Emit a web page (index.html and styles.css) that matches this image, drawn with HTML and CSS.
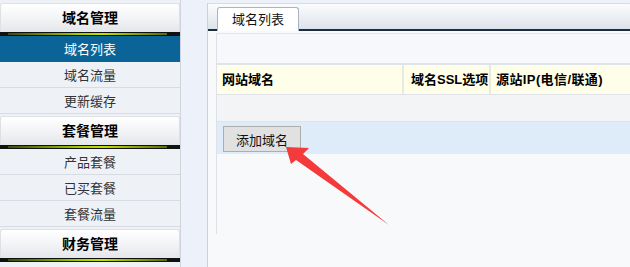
FILE: index.html
```html
<!DOCTYPE html>
<html lang="zh-CN">
<head>
    <meta charset="UTF-8">
    <title>域名列表</title>
    <link rel="stylesheet" href="styles.css">
</head>
<body>
    <div class="page">
        <div class="sidebar">
            <div class="menu-group">
                <div class="menu-title">域名管理</div>
                <div class="menu-bar"><span></span></div>
                <a class="menu-item active" href="#">域名列表</a>
                <a class="menu-item" href="#">域名流量</a>
                <a class="menu-item" href="#">更新缓存</a>
            </div>
            <div class="menu-group">
                <div class="menu-title">套餐管理</div>
                <div class="menu-bar"><span></span></div>
                <a class="menu-item" href="#">产品套餐</a>
                <a class="menu-item" href="#">已买套餐</a>
                <a class="menu-item" href="#">套餐流量</a>
            </div>
            <div class="menu-group">
                <div class="menu-title">财务管理</div>
                <div class="menu-bar"><span></span></div>
            </div>
        </div>

        <div class="main">
            <div class="tabs">
                <div class="tab">域名列表</div>
            </div>
            <div class="content">
                <div class="grid">
                    <div class="toolbar"></div>
                    <div class="row head">
                        <div class="col c1">网站域名</div>
                        <div class="col c2">域名SSL选项</div>
                        <div class="col c3">源站IP(电信/联通)</div>
                    </div>
                    <div class="row empty"></div>
                    <div class="actions">
                        <button class="btn">添加域名</button>
                    </div>
                </div>
            </div>
        </div>
    </div>

    <!-- red annotation arrow -->
    <svg class="arrow" width="630" height="267" viewBox="0 0 630 267">
        <polygon points="286,147 309,148 303,154 389,225 296,160 291,164" fill="#f43a3a"/>
    </svg>
</body>
</html>
```

FILE: styles.css
```css
body {
    margin: 0;
    padding: 0;
    background-color: #edf2fa;
    font-family: "Liberation Sans", "Noto Sans CJK SC", sans-serif;
    color: #222;
    overflow: hidden;
}

.page {
    display: flex;
    height: 267px;
}

/* Sidebar */
.sidebar {
    width: 180px;
    padding-top: 3px;
    border-right: 1px solid #cfd5de;
    background-color: #eef2f7;
    flex-shrink: 0;
}

.menu-group {
    margin-bottom: 2px;
}

.menu-title {
    height: 28px;
    line-height: 29px;
    text-align: center;
    font-size: 14px;
    font-weight: bold;
    color: #000;
    background: linear-gradient(#ffffff, #f3f4f6 50%, #e3e6ea);
    border: 1px solid #dde1e6;
    border-bottom: none;
    border-radius: 3px 3px 0 0;
}

.menu-bar {
    height: 4px;
    background-color: #111;
    padding: 1px 13px 0 8px;
    box-sizing: border-box;
}

.menu-bar span {
    display: block;
    height: 2px;
    background: linear-gradient(to right, #3b4a10, #a8cc00 45%, #c2e000 60%, #5a6a14);
}

.menu-item {
    display: block;
    height: 25px;
    line-height: 27px;
    text-align: center;
    font-size: 13px;
    color: #333;
    text-decoration: none;
    background-color: #eef2f7;
    border-bottom: 1px solid #d8dce2;
    overflow: hidden;
}

.menu-item.active {
    background-color: #0b6497;
    color: #fff;
    border-bottom-color: #0b6497;
}

/* Main panel */
.main {
    flex: 1;
    margin-left: 26px;
    margin-top: 3px;
    border-left: 1px solid #c9d1dc;
    border-top: 1px solid #d6dce5;
    background-color: #f8f9fb;
}

.tabs {
    height: 25px;
    padding-left: 9px;
    background: linear-gradient(#fbfcfd, #e9edf2 60%, #dde3ea);
    border-bottom: 2px solid #1c2d40;
    display: flex;
    align-items: flex-end;
}

.tab {
    width: 80px;
    height: 23px;
    line-height: 24px;
    margin-bottom: -2px;
    text-align: center;
    font-size: 13px;
    color: #111;
    background-color: #fff;
    border: 1px solid #aab3bf;
    border-bottom: none;
    border-radius: 3px 3px 0 0;
}

.content {
    padding: 2px 0 0 8px;
}

.grid {
    border-left: 1px solid #dde2e9;
    border-top: 1px solid #e3e7ed;
    min-height: 200px;
    background-color: #f8f9fb;
}

.toolbar {
    height: 29px;
    background-color: #f7f8fb;
    border-bottom: 2px solid #dfe3ea;
}

.row {
    display: flex;
    border-bottom: 1px solid #dfe3e9;
}

.row.head {
    height: 29px;
    background-color: #fffee8;
}

.col {
    line-height: 29px;
    font-size: 13px;
    font-weight: bold;
    color: #000;
    padding-left: 5px;
    box-sizing: border-box;
}

.c1 {
    width: 187px;
    border-right: 2px solid #e8e9e0;
}

.c2 {
    width: 87px;
    padding-left: 7px;
    border-right: 2px solid #e8e9e0;
}

.c3 {
    flex: 1;
    padding-left: 5px;
    letter-spacing: 0.4px;
}

.row.empty {
    height: 26px;
    background-color: #f3f4f6;
}

.actions {
    height: 32px;
    background-color: #deebf9;
    padding: 4px 0 0 6px;
    box-sizing: border-box;
}

.btn {
    width: 78px;
    height: 26px;
    font-family: "Liberation Sans", "Noto Sans CJK SC", sans-serif;
    font-size: 13px;
    color: #111;
    background-color: #e1e1e1;
    border: 1px solid #adadad;
    padding: 0;
}

/* annotation overlay */
.arrow {
    position: absolute;
    left: 0;
    top: 0;
    pointer-events: none;
}
```
